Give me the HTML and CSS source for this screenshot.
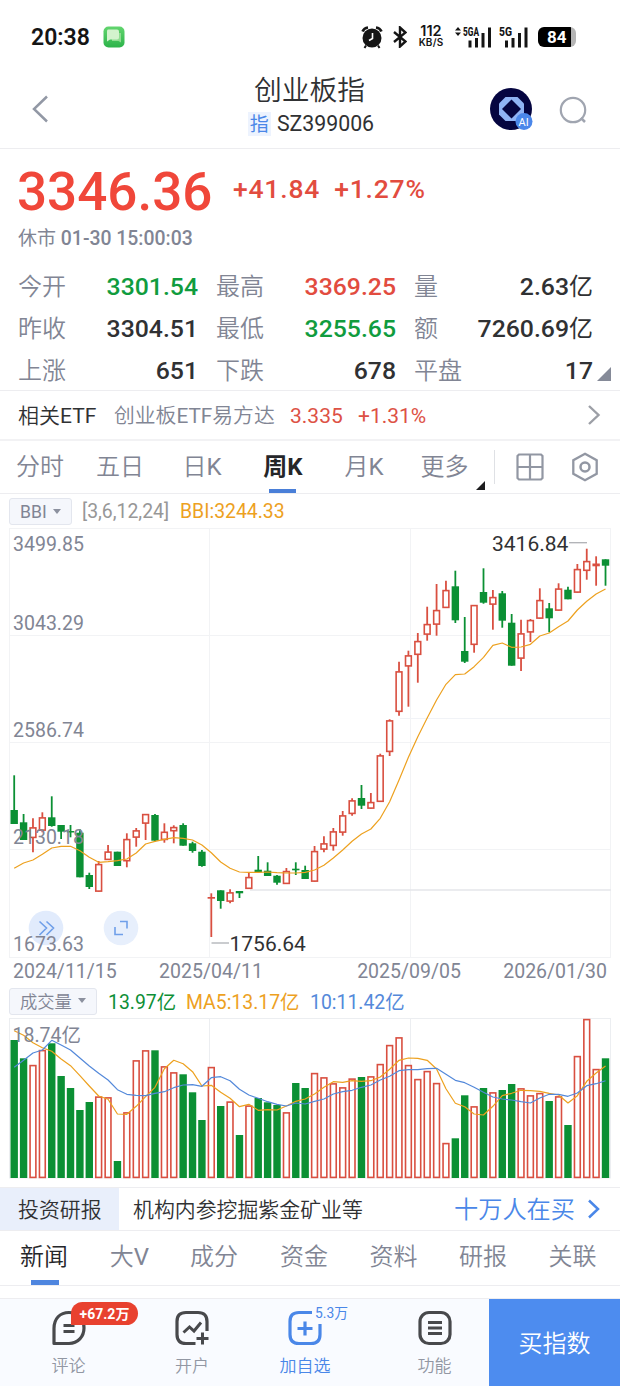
FILE: index.html
```html
<!DOCTYPE html>
<html lang="zh-CN">
<head>
    <meta charset="UTF-8">
    <meta name="viewport" content="width=device-width, initial-scale=1.0">
    <title>创业板指 SZ399006</title>
    <link rel="stylesheet" href="styles.css">
</head>
<body>
    <div class="statusbar">
        <span class="clock">20:38</span>
        <svg class="msg-icon" width="22" height="22" viewBox="0 0 22 22">
            <defs><linearGradient id="msg" x1="0" y1="0" x2="0" y2="1"><stop offset="0" stop-color="#62d56e"/><stop offset="1" stop-color="#2db34a"/></linearGradient></defs>
            <rect x=".5" y=".5" width="21" height="21" rx="5" fill="url(#msg)"/>
            <path d="M9 7h9v9.500l-2.500-1.500H9z" fill="#8fdc91"/>
            <path d="M5 3.500h9q2 0 2 2v6q0 2-2 2H7l-3 2V5.500q0-2 1-2z" fill="#d3f3cd"/>
        </svg>
        <div class="status-right">
            <svg width="22" height="23" viewBox="0 0 22 23">
                <circle cx="11" cy="12" r="9.500" fill="#151515"/>
                <path d="M1.500 5.500Q3 2 7 1.500M15 1.500q4 .5 5.500 4" stroke="#151515" stroke-width="2.600" fill="none"/>
                <path d="M5 19.500l-1.500 2.500M17 19.500l1.500 2.500" stroke="#151515" stroke-width="2"/>
                <path d="M11.500 7v5.500L8 14.500" stroke="#fff" stroke-width="1.600" fill="none"/>
            </svg>
            <svg class="bluetooth" width="14" height="22" viewBox="0 0 14 22">
                <path d="M1 6l11.500 9.500L7 20.500v-19l5.500 5L1 16" stroke="#151515" stroke-width="2.400" fill="none"/>
            </svg>
            <div class="speed"><b>112</b><span>KB/S</span></div>
            <svg class="signal-a" width="37" height="24" viewBox="0 0 37 24">
                <path d="M0 5.500L3 2l3 3.500zM0 7.500h6L3 11z" fill="#151515"/>
                <text x="8" y="10.500" class="net" textLength="16" lengthAdjust="spacingAndGlyphs">5GA</text>
                <path d="M15 22.500v-7M21.500 22.500V13M28 22.500V8M34.500 22.500v-20" stroke="#151515" stroke-width="3"/>
            </svg>
            <svg class="signal-b" width="30" height="24" viewBox="0 0 30 24">
                <text x="0" y="10.500" class="net" textLength="13" lengthAdjust="spacingAndGlyphs">5G</text>
                <path d="M7.500 22.500v-7M14 22.500V13M20.500 22.500V8M27 22.500v-20" stroke="#151515" stroke-width="3"/>
            </svg>
            <div class="battery">84</div>
        </div>
    </div>

    <header class="header">
        <svg class="back" width="18" height="28" viewBox="0 0 18 28"><path d="M16 1.500L3 14l13 12.500" fill="none" stroke="#9298a5" stroke-width="2.500"/></svg>
        <div class="title">
            <h1>创业板指</h1>
            <p><i>指</i>SZ399006</p>
        </div>
        <svg class="ai" width="43" height="43" viewBox="0 0 43 43">
            <circle cx="21" cy="21" r="21" fill="#050540"/>
            <path d="M15.500 9h12l6.500 6.500v11L27.500 33h-12L9 26.500v-11z" fill="#8fb3f4"/>
            <path d="M21.500 11.500l9.500 9.500-9.500 9.500L12 21z" fill="#050540"/>
            <circle cx="34" cy="33.500" r="8.500" fill="#4a87ea"/>
            <text x="28.500" y="37.500" class="ai-text">AI</text>
        </svg>
        <svg class="search" width="28" height="28" viewBox="0 0 28 28"><circle cx="14" cy="14" r="12.200" fill="none" stroke="#a0a5b0" stroke-width="2.200"/><path d="M22 22l4 4" stroke="#a0a5b0" stroke-width="2.500"/></svg>
    </header>

    <section class="quote">
        <div class="price-row">
            <span class="price">3346.36</span>
            <span class="change">+41.84</span>
            <span class="change">+1.27%</span>
        </div>
        <div class="time"><span>休市</span> 01-30 15:00:03</div>
        <div class="stats">
            <div><label>今开</label><b class="down">3301.54</b></div>
            <div><label>最高</label><b class="up">3369.25</b></div>
            <div><label>量</label><b class="amount">2.63<i>亿</i></b></div>
            <div><label>昨收</label><b>3304.51</b></div>
            <div><label>最低</label><b class="down">3255.65</b></div>
            <div><label>额</label><b class="amount">7260.69<i>亿</i></b></div>
            <div><label>上涨</label><b>651</b></div>
            <div><label>下跌</label><b>678</b></div>
            <div><label>平盘</label><b>17</b></div>
        </div>
        <i class="expand"></i>
    </section>

    <div class="etf">
        <span class="etf-title">相关<em>ETF</em></span>
        <span class="etf-name">创业板<em>ETF</em>易方达</span>
        <span class="etf-price">3.335</span>
        <span class="etf-rate">+1.31%</span>
        <svg width="14" height="22" viewBox="0 0 14 22"><path d="M2 2l9.500 9L2 20" fill="none" stroke="#9c9fa6" stroke-width="2.400"/></svg>
    </div>

    <nav class="periods">
        <span>分时</span>
        <span>五日</span>
        <span>日<em>K</em></span>
        <span class="active">周K</span>
        <span>月<em>K</em></span>
        <span>更多<i></i></span>
        <div class="tools">
            <svg width="28" height="28" viewBox="0 0 28 28"><path d="M3 1.500h22l1.500 1.500v22L25 26.500H3L1.500 25V3zM14 1.500v25M1.500 14h25" fill="none" stroke="#9297a3" stroke-width="2.200"/></svg>
            <svg width="28" height="30" viewBox="0 0 28 30"><path d="M14 1.800l11.700 6.500v13.400L14 28.200 2.300 21.700V8.300z" fill="none" stroke="#9297a3" stroke-width="2.300"/><circle cx="14" cy="15" r="4.500" fill="none" stroke="#9297a3" stroke-width="2.500"/></svg>
        </div>
    </nav>

    <div class="indicator">
        <span class="chip">BBI<i></i></span>
        <span class="params">[3,6,12,24]</span>
        <span class="bbi">BBI:3244.33</span>
    </div>
    <svg id="kline" width="620" height="430" viewBox="0 528 620 430"></svg>
    <div class="dates">
        <span>2024/11/15</span>
        <span>2025/04/11</span>
        <span>2025/09/05</span>
        <span>2026/01/30</span>
    </div>

    <div class="indicator volume-indicator">
        <span class="chip">成交量<i></i></span>
        <span class="vol">13.97亿</span>
        <span class="ma5">MA5:13.17亿</span>
        <span class="ma10">10:11.42亿</span>
    </div>
    <svg id="volume" width="620" height="169" viewBox="0 1018 620 169"></svg>

    <div class="promo">
        <span class="promo-tag">投资研报</span>
        <span class="promo-text">机构内参挖掘紫金矿业等</span>
        <span class="promo-link">十万人在买</span>
        <svg width="14" height="20" viewBox="0 0 14 20"><path d="M2 1.500L11 10l-9 8.500" fill="none" stroke="#4a87e8" stroke-width="2.500"/></svg>
    </div>

    <nav class="news">
        <span class="active">新闻</span>
        <span>大<em>V</em></span>
        <span>成分</span>
        <span>资金</span>
        <span>资料</span>
        <span>研报</span>
        <span>关联</span>
    </nav>

    <footer class="bottom">
        <div class="item">
            <svg width="36" height="36" viewBox="0 0 36 36"><path d="M3 33.500V18.500C3 8.500 9 2.500 18 2.500s15 7 15 15.500-6 15.500-15 15.500z" fill="none" stroke="#48494c" stroke-width="3.200" stroke-linejoin="round"/><path d="M12.500 15.500h11M12.500 21.500h11" stroke="#48494c" stroke-width="3"/></svg>
            <strong class="badge">+67.2万</strong>
            <span>评论</span>
        </div>
        <div class="item">
            <svg width="36" height="36" viewBox="0 0 36 36"><path d="M21.500 33.500H12Q3 33.500 3 24.500V11.500Q3 2.500 12 2.500h12q9 0 9 9V21" fill="none" stroke="#48494c" stroke-width="3.200"/><path d="M9.500 22.500l6-5.500 4.500 4 7-8.500" fill="none" stroke="#48494c" stroke-width="3"/><path d="M28.500 22.500v12M22.500 28.500h12" stroke="#48494c" stroke-width="3"/></svg>
            <span>开户</span>
        </div>
        <div class="item select">
            <svg width="36" height="36" viewBox="0 0 36 36"><path d="M25 2.500H12Q3 2.500 3 11.500v13q0 9 9 9h12q9 0 9-9V14" fill="none" stroke="#4a87e8" stroke-width="3.200"/><path d="M18 11.500v14M10.500 18.500h15" stroke="#4a87e8" stroke-width="3.200"/></svg>
            <em class="count">5.3万</em>
            <span>加自选</span>
        </div>
        <div class="item">
            <svg width="36" height="36" viewBox="0 0 36 36"><rect x="3" y="2.500" width="30" height="31" rx="9" fill="none" stroke="#48494c" stroke-width="3.200"/><path d="M11 12.500h14M11 18h14M11 23.500h14" stroke="#48494c" stroke-width="3"/></svg>
            <span>功能</span>
        </div>
        <div class="buy">买指数</div>
    </footer>
    <script src="chart.js"></script>
</body>
</html>
```

FILE: styles.css
```css
* {
    box-sizing: border-box;
}

body {
    margin: 0;
    width: 620px;
    height: 1386px;
    overflow: hidden;
    background: #fff;
    color: #303133;
    font-family: Roboto, "Noto Sans CJK SC", sans-serif;
    font-weight: 400;
}

svg {
    display: block;
    flex: none;
}

h1, p {
    margin: 0;
    font-weight: 400;
}

i, em {
    font-style: normal;
}

em {
    font-weight: 400;
}

span {
    white-space: nowrap;
}

.up {
    color: #e24c3f;
}

.down {
    color: #109c3e;
}

/* status bar */
.statusbar {
    display: flex;
    align-items: center;
    height: 74px;
    padding: 0 44px 0 30px;
    color: #151515;
}

.clock {
    width: 73px;
    padding-left: 1px;
    font-size: 23px;
    font-weight: 600;
}

.status-right {
    display: flex;
    align-items: center;
    margin-left: auto;
}

.bluetooth {
    margin-left: 10px;
}

.speed {
    display: flex;
    flex-direction: column;
    align-items: center;
    width: 26px;
    margin-left: 11px;
    padding-bottom: 2px;
    font-family: Inter, sans-serif;
}

.speed b {
    font-size: 14.500px;
    font-weight: 600;
    line-height: 13px;
}

.speed span {
    font-size: 10px;
    font-weight: 600;
    line-height: 11px;
    letter-spacing: 0.2px;
}

.net {
    font: 800 12.500px Roboto, sans-serif;
    fill: #151515;
}

.signal-a {
    margin-left: 11px;
}

.signal-b {
    margin-left: 7px;
}

.battery {
    width: 38px;
    height: 20px;
    margin-left: 9px;
    padding-left: 9px;
    border-radius: 6px;
    background: linear-gradient(90deg, #000 33px, #b5b5b5 33px);
    color: #fff;
    font: 700 17px/21px Roboto, sans-serif;
}

/* header */
.header {
    display: flex;
    height: 75px;
    padding-left: 31px;
    border-bottom: 1px solid #ededf0;
}

.back {
    margin-top: 21px;
}

.title {
    width: 220px;
    margin-left: 152px;
    text-align: center;
}

.title h1 {
    padding-right: 3px;
    font-size: 27.800px;
    font-weight: 350;
    line-height: 34px;
}

.title p {
    display: flex;
    justify-content: center;
    font-size: 21.300px;
    line-height: 32px;
}

.title i {
    width: 23px;
    height: 24px;
    margin: 4px 6px 0 0;
    background: #edf3fe;
    color: #4a87e8;
    font-size: 19px;
    line-height: 26px;
}

.ai {
    margin: 14px 0 0 69px;
}

.ai-text {
    fill: #fff;
    font-size: 11px;
}

.search {
    margin: 22px 0 0 26px;
}

/* quote */
.quote {
    position: relative;
    height: 242px;
    border-bottom: 1px solid #ededf0;
}

.price-row {
    display: flex;
    align-items: center;
    height: 80px;
    padding-left: 17px;
}

.price {
    width: 216px;
    padding-top: 5px;
    color: #f0473a;
    font-size: 53px;
    font-weight: 500;
}

.change {
    margin-right: 14px;
    padding-bottom: 1px;
    color: #e24c3f;
    font-size: 26.500px;
    font-weight: 500;
    letter-spacing: 0.8px;
}

.time {
    height: 36px;
    padding-left: 18px;
    color: #818594;
    font-size: 19.400px;
    font-weight: 500;
    line-height: 20px;
}

.time span {
    font-size: 19px;
    font-weight: 400;
}

.stats {
    display: grid;
    grid-template-columns: 180px 180px 179px;
    grid-auto-rows: 42px;
    column-gap: 18px;
    padding-left: 18px;
}

.stats div {
    display: flex;
    justify-content: space-between;
    align-items: center;
}

.stats label {
    padding-bottom: 4px;
    color: #818594;
    font-size: 24px;
    font-weight: 350;
}

.stats b {
    font-size: 24.800px;
    font-weight: 500;
}

.stats .amount {
    padding-bottom: 3px;
}

.amount i {
    font-size: 24px;
    font-weight: 400;
}

.expand {
    position: absolute;
    right: 9px;
    bottom: 9px;
    border-left: 14px solid transparent;
    border-bottom: 14px solid #858a98;
}

/* related etf */
.etf {
    display: flex;
    align-items: center;
    height: 50px;
    padding: 0 19px 0 18px;
    border-bottom: 2px solid #f2f2f4;
    font-size: 21px;
}

.etf-title {
    width: 96px;
    padding-bottom: 2px;
    font-weight: 350;
}

.etf-name {
    width: 176px;
    padding-bottom: 2px;
    color: #818594;
    font-size: 20.800px;
    font-weight: 350;
}

.etf-price {
    width: 68px;
    padding-top: 1px;
    color: #dd5145;
}

.etf-rate {
    padding-top: 1px;
    color: #dd5145;
}

.etf svg {
    margin-left: auto;
}

/* period tabs */
.periods {
    display: grid;
    grid-template-columns: 80px 80px 84px 78px 84px 88px 126px;
    height: 53px;
    border-bottom: 1px solid #ededf0;
    color: #818594;
    font-size: 24px;
    font-weight: 350;
    line-height: 53px;
    text-align: center;
}

.periods span {
    position: relative;
    height: 52px;
}

.periods span:nth-child(6) {
    padding-right: 11px;
}

.periods .active {
    color: #252629;
    font-weight: 700;
}

.periods .active::after {
    content: "";
    position: absolute;
    left: 25px;
    bottom: 0;
    width: 27px;
    height: 4px;
    background: #4a7fd8;
}

.periods span i {
    position: absolute;
    right: 9px;
    bottom: 3px;
    border-left: 9px solid transparent;
    border-bottom: 9px solid #1d1d1f;
}

.tools {
    display: flex;
    align-items: center;
    gap: 27px;
    height: 34px;
    margin-top: 9px;
    padding-left: 21px;
    border-left: 1px solid #dfe1e5;
}

/* indicators */
.indicator {
    display: flex;
    align-items: center;
    height: 34px;
    padding: 1px 0 0 9px;
    font-size: 19.400px;
}

.chip {
    display: flex;
    align-items: center;
    justify-content: space-between;
    width: 63px;
    height: 27px;
    margin-right: 10px;
    padding: 0 10px;
    border: 1px solid #e3e6ee;
    border-radius: 3px;
    background: #f5f7fc;
    color: #818594;
    font-size: 17.600px;
}

.chip i {
    border: 4.500px solid transparent;
    border-top: 5px solid #8c919f;
    border-bottom: 0;
}

.params {
    width: 98px;
    color: #979797;
}

.bbi, .ma5 {
    color: #eda11f;
}

.dates {
    display: flex;
    justify-content: space-between;
    height: 28px;
    padding: 0 13px;
    color: #818594;
    font-size: 19.500px;
    line-height: 28px;
}

.dates span:nth-child(2) {
    margin-right: 52px;
}

.volume-indicator {
    height: 32px;
    padding: 0 0 2px 9px;
}

.volume-indicator .chip {
    width: 88px;
    margin-right: 11px;
    padding-bottom: 1px;
    font-size: 17.300px;
    font-weight: 350;
}

.vol {
    width: 78px;
    color: #0e8f37;
}

.ma5 {
    width: 124px;
}

.ma10 {
    color: #5489da;
}

.vol, .ma5, .ma10 {
    padding-bottom: 2px;
}

/* chart text */
.axis {
    fill: #818594;
    font-size: 19.500px;
}

.mark {
    fill: #303133;
    font-size: 21px;
}

/* promo */
.promo {
    display: flex;
    align-items: center;
    height: 44px;
    border-top: 1px solid #ededf0;
    border-bottom: 1px solid #ededf0;
    font-size: 20.900px;
}

.promo-tag {
    width: 119px;
    height: 42px;
    padding-left: 18px;
    background: #e9effb;
    font-weight: 350;
    line-height: 44px;
}

.promo-text {
    width: 335px;
    padding: 0 0 2px 14px;
    font-weight: 350;
}

.promo-link {
    width: 133px;
    padding-bottom: 4px;
    color: #4a87e8;
    font-size: 24.200px;
    font-weight: 350;
}

/* news tabs */
.news {
    display: grid;
    grid-template-columns: 88px 83px 86px 94px 85px 94px 85px;
    height: 55px;
    border-bottom: 1px solid #ededf0;
    color: #818594;
    font-size: 24px;
    font-weight: 350;
    line-height: 53px;
    text-align: center;
}

.news .active {
    position: relative;
    color: #252629;
}

.news .active::after {
    content: "";
    position: absolute;
    left: 31px;
    bottom: 0;
    width: 28px;
    height: 5px;
    background: #4f86df;
}

/* bottom bar */
.bottom {
    display: grid;
    grid-template-columns: 137px 110px 116px 126px 131px;
    height: 88px;
    margin-top: 12px;
    border-top: 1px solid #ededf0;
    background: #f9fbff;
}

.item {
    position: relative;
    display: flex;
    flex-direction: column;
    align-items: center;
    padding-top: 11px;
    color: #9297a3;
    font-size: 17px;
    font-weight: 350;
}

.item > span {
    margin-top: 8px;
    line-height: 25px;
}

.item:nth-child(4) {
    padding-left: 17px;
}

.select {
    color: #4a87e8;
}

.badge {
    position: absolute;
    left: 71px;
    top: 3px;
    width: 67px;
    height: 23px;
    border-radius: 12px 12px 12px 0;
    background: #e8412f;
    color: #fff;
    font-size: 14px;
    font-weight: 700;
    line-height: 24px;
    text-align: center;
}

.count {
    position: absolute;
    left: 68px;
    top: 4px;
    font-size: 13.800px;
    font-weight: 400;
    line-height: 20px;
}

.buy {
    background: #4d8cef;
    color: #fff;
    font-size: 24px;
    font-weight: 350;
    line-height: 90px;
    height: 87px;
    text-align: center;
}
```

FILE: chart.js
```javascript
const RED = '#d94f40';
const GREEN = '#0b9034';
const ORANGE = '#eda11f';
const BLUE = '#5489da';

// [up, high, top, bottom, low]
const candles = [
    [0, 775.3, 810, 824, 824], [0, 814, 822.3, 840, 840], [1, 818.3, 827.3, 838, 852.3], [1, 812.3, 817.3, 830.7, 832.3],
    [0, 796.3, 817.3, 826, 826.7], [0, 825, 825, 831.7, 839], [0, 825, 831, 832.5, 837.3], [0, 829.3, 832.7, 877.3, 877.3],
    [0, 872.7, 875, 887, 889], [1, 861, 864, 891.7, 891.7], [1, 845, 851.5, 860, 860], [0, 851.7, 851.7, 866, 866],
    [1, 833.3, 839, 861.3, 867.3], [1, 828, 830.3, 837.7, 846.7], [1, 814, 814, 823.7, 840], [0, 814, 815, 840.7, 841.5],
    [1, 823.3, 831.7, 840, 842.7], [1, 825.3, 827, 831.3, 843.3], [0, 823.3, 825, 845.7, 845.7], [0, 841.7, 843.3, 851, 852.7],
    [0, 850, 851.7, 866, 866.7], [1, 893.3, 897, 898.7, 937], [0, 890.3, 890.3, 901, 908.7], [1, 889.3, 892.3, 901.7, 903.3],
    [0, 891, 891, 893.3, 898], [1, 872.7, 877, 888.9, 888.9], [0, 856, 869.7, 872.3, 872.3], [0, 862.3, 870.7, 876, 876],
    [0, 875, 875.7, 882.7, 884.7], [1, 868, 871, 884, 884], [0, 862.3, 868.7, 870.3, 875], [0, 865.7, 870, 879, 879],
    [1, 846, 851, 881.7, 881.7], [1, 836.3, 843.3, 849.7, 852.3], [1, 828, 831.3, 846, 850.7], [1, 811, 815.3, 832.7, 835.7],
    [1, 798.3, 800.3, 814, 815.7], [0, 785, 798, 805.7, 809], [1, 793, 802, 808.7, 808.7], [1, 753.7, 755.3, 801.9, 801.9],
    [1, 719.3, 720.3, 752, 756], [1, 661.7, 671.3, 711.9, 715.7], [1, 650.7, 655.3, 666.5, 706.7], [1, 633, 641, 654.9, 682.7],
    [1, 606.7, 624, 634.7, 640.7], [1, 584, 610, 624.7, 635.7], [1, 580.7, 590, 608, 608], [0, 570.7, 586.3, 620.3, 623],
    [0, 617, 651, 661.7, 663], [1, 605, 605, 644.9, 652.7], [0, 568.3, 592, 602.7, 603.7], [1, 590, 597, 604.7, 629.7],
    [0, 591, 593.3, 620.7, 627.7], [0, 614, 622.7, 665.7, 665.7], [1, 619.7, 633.3, 658.7, 671], [1, 619, 620, 632.5, 642],
    [1, 588.3, 600, 618.7, 618.7], [0, 603, 608.3, 618.3, 632.3], [1, 583.3, 588.5, 610.7, 610.7], [0, 586.7, 589.7, 599.3, 599.3],
    [1, 564, 569, 592.7, 592.7], [1, 548.7, 561, 570.9, 579.7], [1, 556.3, 563.5, 566.3, 585.7], [0, 559.3, 559.3, 565.7, 585.7]
];

const bbi = [868.3, 863, 860, 854.3, 848, 846.3, 846.3, 850.7, 857.3, 862.3, 861.7, 860.7, 859, 853, 844, 841.3,
    839.3, 837.7, 838.3, 840, 845, 852.7, 862, 868.3, 872, 872.3, 872.3, 872, 872.7, 873, 873, 872.3,
    870, 865.3, 858, 850, 841.3, 834, 829, 818.3, 801.7, 780, 757.3, 736.7, 718, 700, 684.3, 674.7,
    674, 666.7, 657.3, 645.3, 643, 647.3, 647, 644.3, 636, 633, 626.7, 621, 610, 601.3, 594, 589];

const volumes = [1040, 1058.3, 1065, 1050, 1043.3, 1076, 1088, 1110, 1102, 1096.5, 1097.3, 1161, 1112.3, 1060.3, 1050.3, 1050.3,
    1066.3, 1072.3, 1074.3, 1092.3, 1120, 1067, 1106, 1101.5, 1135, 1105.5, 1098, 1102.3, 1105, 1112.3, 1083, 1088,
    1073, 1077.3, 1083.3, 1087.3, 1078.5, 1077, 1076.3, 1064, 1045, 1037.3, 1065, 1079, 1071, 1083, 1143, 1138.3,
    1095.3, 1106.3, 1088, 1092.3, 1090, 1084, 1088.3, 1095.3, 1093, 1101, 1096.3, 1125, 1056, 1019, 1069, 1058.3];

const ma5 = [1030.7, 1035.3, 1042.7, 1047.7, 1051.3, 1059, 1065.7, 1075.7, 1086, 1096, 1099.3, 1114, 1114.3, 1106.3, 1096.7, 1087.3,
    1068.7, 1060.3, 1063.7, 1071.7, 1086, 1085.3, 1092.3, 1098.3, 1106.7, 1104.3, 1110.3, 1109.7, 1110, 1106, 1101.3, 1099,
    1094, 1087.3, 1081.7, 1082.3, 1080.7, 1081.3, 1080.7, 1077, 1069.3, 1060.3, 1058, 1058.3, 1060.3, 1069, 1088.7, 1103.3,
    1106.7, 1114, 1115, 1106.3, 1095.7, 1093.3, 1090.3, 1090.7, 1091.3, 1093.3, 1095, 1103, 1095.7, 1081.3, 1073, 1066];

const ma10 = [1067.3, 1060.3, 1053, 1050, 1040.3, 1045, 1050, 1058, 1066, 1073.3, 1080, 1089.7, 1094.3, 1095.3, 1095.7, 1093.3,
    1091.7, 1087.7, 1085, 1084.7, 1086.3, 1077.7, 1076.7, 1080.7, 1089.3, 1095, 1098.3, 1101.7, 1104.3, 1106, 1103, 1104,
    1101.3, 1099, 1094, 1091.7, 1090.3, 1087.3, 1085, 1080, 1076.3, 1070.7, 1069.7, 1069.7, 1068.7, 1068.3, 1074.3, 1080.3,
    1082.7, 1087.3, 1092.3, 1097, 1099, 1100, 1101.7, 1103, 1098, 1094.3, 1094.3, 1096.3, 1093, 1085.7, 1083.7, 1080.7];

const x = i => 14.2 + i * 9.386;

function line(x1, y1, x2, y2, color, width = 1) {
    return `<line x1="${x1}" y1="${y1}" x2="${x2}" y2="${y2}" stroke="${color}" stroke-width="${width}"/>`;
}

function bar(i, top, bottom, up) {
    const h = bottom - top;
    if (up && h > 3.5) {
        return `<rect x="${x(i) - 2.9}" y="${top + 0.6}" width="5.8" height="${h - 1.2}" fill="#fff" stroke="${RED}" stroke-width="1.6"/>`;
    }
    return `<rect x="${x(i) - 3.7}" y="${top}" width="7.4" height="${h}" fill="${up ? RED : GREEN}"/>`;
}

function curve(values, color) {
    const points = values.map((y, i) => `${x(i)},${y}`).join(' ');
    return `<polyline points="${points}" fill="none" stroke="${color}" stroke-width="1.2" stroke-linejoin="round"/>`;
}

function text(tx, ty, value, cls = 'axis') {
    return `<text x="${tx}" y="${ty}" class="${cls}">${value}</text>`;
}

function drawKline() {
    let out = '';
    [528.5, 635.5, 742.5, 849.5, 957.5].forEach(y => out += line(9, y, 611, y, '#f2f3f5'));
    [9.5, 209.5, 410.5, 610.5].forEach(gx => out += line(gx, 528, gx, 958, '#f2f3f5'));
    out += line(400, 718.5, 611, 718.5, '#f1f3f7') + line(250, 890, 611, 890, '#e5e6ea', 1.5);
    candles.forEach(([up, high, top, bottom, low], i) => {
        out += line(x(i), high, x(i), low, up ? RED : GREEN, 1.8) + bar(i, top, bottom, up);
    });
    out += curve(bbi, ORANGE);
    // zoom buttons
    out += '<circle cx="46" cy="928" r="17.3" fill="#dce8fb" fill-opacity=".85"/><circle cx="121" cy="928" r="17.3" fill="#e7effc"/>';
    out += `<path d="M39.500 921.500l7 6.500-7 7M46.500 921.500l7 6.500-7 7M120 921.500h7v7M115 927v7.500h8" fill="none" stroke="#6f9fe9" stroke-width="1.6"/>`;
    out += text(13, 551, '3499.85') + text(13, 630, '3043.29') + text(13, 737, '2586.74') + text(13, 844, '2130.18') + text(13, 951, '1673.63');
    out += text(492, 551, '3416.84', 'mark') + line(569, 542.7, 587, 542.7, '#aeb0b5', 1.3);
    out += text(229.5, 951, '1756.64', 'mark') + line(211.5, 943, 229, 943, '#aeb0b5', 1.3);
    document.getElementById('kline').innerHTML = out;
}

function drawVolume() {
    let out = line(9, 1018.5, 611, 1018.5, '#eceef1') + line(9, 1178, 611, 1178, '#f0f1f3');
    [9.5, 209.5, 410.5, 610.5].forEach(gx => out += line(gx, 1018, gx, 1178, '#eceef1'));
    volumes.forEach((y, i) => out += bar(i, y, 1178, candles[i][0]));
    out += curve(ma5, ORANGE) + curve(ma10, BLUE) + text(12.5, 1041.5, '18.74亿');
    document.getElementById('volume').innerHTML = out;
}

drawKline();
drawVolume();
```
